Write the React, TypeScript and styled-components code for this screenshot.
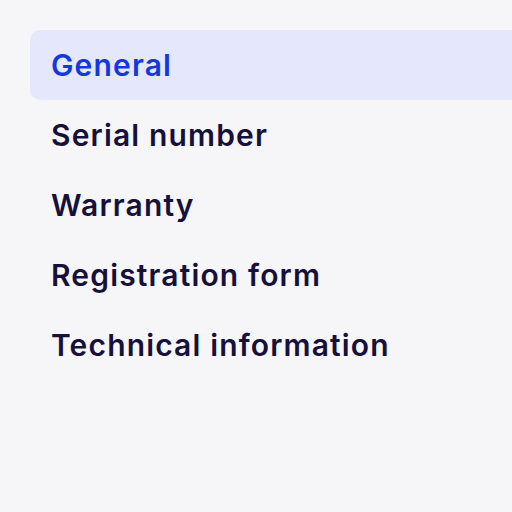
import React from 'react';
import styled, { createGlobalStyle } from 'styled-components';

const GlobalStyle = createGlobalStyle`
  html, body {
    margin: 0;
    padding: 0;
    background: #f6f6f9;
  }
  body {
    font-family: Inter, "Noto Sans", sans-serif;
  }
`;

const items = [
  'General',
  'Serial number',
  'Warranty',
  'Registration form',
  'Technical information',
];

const App = () => {
  return (
    <>
      <GlobalStyle />
      <Page>
        <Menu>
          {items.map((label, i) => (
            <MenuItem key={label} active={i === 0}>
              {label}
            </MenuItem>
          ))}
        </Menu>
      </Page>
    </>
  );
};

const Page = styled.div`
  width: 512px;
  height: 512px;
  overflow: hidden;
  padding: 30px 0 0 30px;
  box-sizing: border-box;
`;

const Menu = styled.nav`
  display: flex;
  flex-direction: column;
  width: 520px;
`;

const MenuItem = styled.div<{ active?: boolean }>`
  height: 70px;
  display: flex;
  align-items: center;
  padding-left: 21px;
  padding-bottom: 1px;
  box-sizing: border-box;
  border-radius: 10px;
  font-size: 30px;
  font-weight: 600;
  letter-spacing: 1.15px;
  color: ${(p) => (p.active ? '#1438e0' : '#16113a')};
  background: ${(p) => (p.active ? '#e5e8fc' : 'transparent')};
`;

export default App;
